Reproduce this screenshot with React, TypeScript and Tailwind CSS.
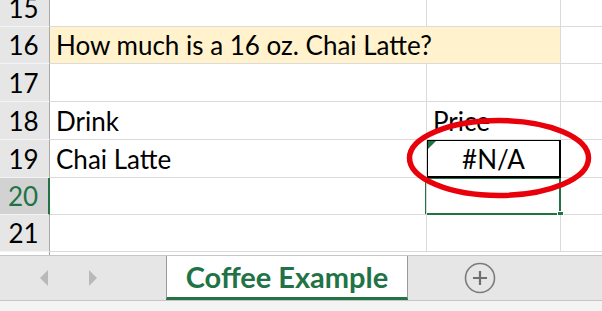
import React from 'react';

const GREEN = '#217346';

type RowProps = {
  num: number;
  h: string;
  a?: React.ReactNode;
  b?: React.ReactNode;
  fill?: boolean;
  active?: boolean;
  bCell?: 'error' | 'selected';
};

const Row: React.FC<RowProps> = ({ num, h, a, b, fill, active, bCell }) => {
  return (
    <div className={`flex ${h} overflow-hidden`}>
      <div
        className={`w-[50px] shrink-0 flex items-end justify-center border-b border-b-[#f4f4f4] ${
          active ? 'bg-[#d2d2d2] text-[#217346] border-r-2 border-r-[#217346]' : 'bg-[#e6e6e6] text-black border-r border-r-[#a8a8a8]'
        }`}
      >
        <span className="leading-[30px] pb-[3px] pr-[2px]">{num}</span>
      </div>
      <div
        className={`relative z-10 w-[377px] shrink-0 flex items-end pl-[6px] border-b border-r ${
          fill ? 'bg-[#fff2cc] border-r-[#fff2cc] border-b-[#dadada]' : 'border-[#dadada]'
        }`}
      >
        <span className="leading-[30px] pb-[3px] whitespace-nowrap">{a}</span>
      </div>
      <div
        className={`relative w-[134px] shrink-0 flex items-end border-b border-r border-[#dadada] ${
          fill ? 'bg-[#fff2cc] border-r-[#dadada]' : ''
        } ${bCell === 'error' ? 'justify-center' : 'pl-[6px]'}`}
      >
        <span className="leading-[30px] pb-[3px] whitespace-nowrap">{b}</span>
        {bCell === 'error' && (
          <>
            <div className="absolute -left-[1px] -top-[1px] -right-[1px] -bottom-[1px] border-2 border-black" />
            <div className="absolute left-[1px] top-[1px] w-0 h-0 border-t-[8px] border-t-[#217346] border-r-[8px] border-r-transparent" />
          </>
        )}
        {bCell === 'selected' && (
          <>
            <div className="absolute -left-[2px] -top-[1px] -right-[1px] -bottom-[1px] border-2 border-[#217346]" />
            <div className="absolute -right-[4px] -bottom-[4px] w-[7px] h-[7px] bg-[#217346] border border-white" />
          </>
        )}
      </div>
      <div className="flex-1 border-b border-[#dadada]" />
    </div>
  );
};

export default function App() {
  return (
    <div className="relative w-[602px] h-[311px] overflow-hidden bg-white font-['Lato',sans-serif] text-[26px] text-black">
      <div className="flex flex-col">
        <Row num={15} h="h-[27px]" />
        <Row num={16} h="h-[37px]" fill a="How much is a 16 oz. Chai Latte?" />
        <Row num={17} h="h-[38px]" />
        <Row num={18} h="h-[38px]" a="Drink" b="Price" />
        <Row num={19} h="h-[38px]" a="Chai Latte" b="#N/A" bCell="error" />
        <Row num={20} h="h-[37px]" active bCell="selected" />
        <Row num={21} h="h-[37px]" />
      </div>

      <div className="flex h-[3px]">
        <div className="w-[50px] border-r border-[#a8a8a8]" />
      </div>

      {/* sheet tabs */}
      <div className="flex h-[46px] bg-[#e6e6e6] border-t border-[#c6c6c6] border-b border-b-[#c6c6c6]">
        <div className="w-[166px] flex items-center pl-[40px] gap-[41px]">
          <svg width="8" height="16" viewBox="0 0 8 16">
            <polygon points="8,0 0,8 8,16" fill="#b9b9b9" />
          </svg>
          <svg width="8" height="16" viewBox="0 0 8 16">
            <polygon points="0,0 8,8 0,16" fill="#b9b9b9" />
          </svg>
        </div>
        <div className="w-[242px] bg-white border-l border-r border-[#9a9a9a] border-b-[3px] border-b-[#217346] flex items-center justify-center">
          <span className="font-bold text-[29px] leading-none pb-[1px]" style={{ color: GREEN }}>
            Coffee Example
          </span>
        </div>
        <div className="flex-1 flex items-center pl-[56px]">
          <svg width="32" height="32" viewBox="0 0 32 32">
            <circle cx="16" cy="16" r="14.5" fill="none" stroke="#7b7b7b" strokeWidth="1.6" />
            <path d="M16 9v14M9 16h14" stroke="#6f6f6f" strokeWidth="2.2" />
          </svg>
        </div>
      </div>
      <div className="h-[10px] bg-[#f3f3f3]" />

      {/* red annotation ellipse */}
      <svg className="absolute left-[404px] top-[116px] z-20" width="192" height="86" viewBox="0 0 192 86">
        <ellipse cx="95" cy="42" rx="89.5" ry="37.5" fill="none" stroke="#e8000b" strokeWidth="5.5" />
      </svg>
    </div>
  );
}
